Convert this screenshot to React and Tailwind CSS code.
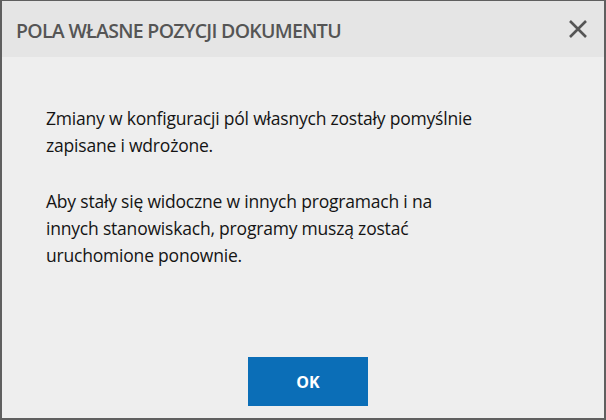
import React from "react";

const X = () => (
  <svg width="20" height="20" viewBox="0 0 20 20" fill="none">
    <path d="M2 2 L18 18 M18 2 L2 18" stroke="#555" strokeWidth="2.6" strokeLinecap="butt" />
  </svg>
);

const App = () => {
  return (
    <div
      className="w-[606px] h-[420px] flex flex-col bg-[#eeeeee] border-2 border-t border-[#5f5f5f] overflow-hidden"
      style={{ fontFamily: '"Open Sans", "Noto Sans", sans-serif' }}
    >
      {/* Header */}
      <div className="h-[56px] shrink-0 bg-[#e5e5e5] flex items-center justify-between pl-[14px] pr-[16px]">
        <h1 className="pt-[4px] text-[19.5px] font-semibold text-[#555555] tracking-[-0.7px]">
          POLA WŁASNE POZYCJI DOKUMENTU
        </h1>
        <button className="w-5 h-5 flex items-center justify-center">
          <X />
        </button>
      </div>

      {/* Body */}
      <div className="flex-1 flex flex-col pl-[44px] pr-10 pt-[48px] text-[17.5px] leading-[26.7px] text-[#141414] tracking-[-0.2px]">
        <p>
          Zmiany w konfiguracji pól własnych zostały pomyślnie
          <br />
          zapisane i wdrożone.
        </p>
        <p className="mt-[30px]">
          Aby stały się widoczne w innych programach i na
          <br />
          innych stanowiskach, programy muszą zostać
          <br />
          uruchomione ponownie.
        </p>
      </div>

      {/* Footer */}
      <div className="flex justify-center pl-[10px] pb-[12px]">
        <button className="w-[120px] h-[49px] bg-[#0b6eb7] text-white font-bold text-[16px]">
          OK
        </button>
      </div>
    </div>
  );
};

export default App;
